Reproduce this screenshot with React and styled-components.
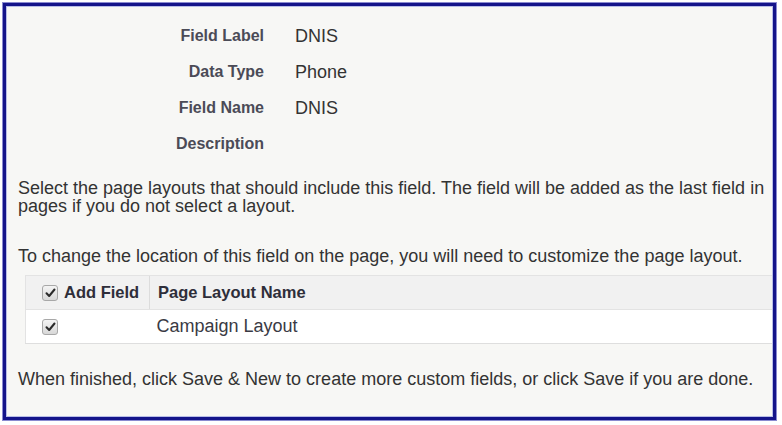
import React from "react";
import styled, { createGlobalStyle } from "styled-components";

const GlobalStyle = createGlobalStyle`
  html, body {
    margin: 0;
    padding: 0;
    background: #ffffff;
  }
  body {
    font-family: "Liberation Sans", Arial, sans-serif;
    color: #333333;
  }
`;

const details = [
  { label: "Field Label", value: "DNIS" },
  { label: "Data Type", value: "Phone" },
  { label: "Field Name", value: "DNIS" },
  { label: "Description", value: "" },
];

const layouts = [{ name: "Campaign Layout", checked: true }];

const Check = () => (
  <CheckBox>
    <svg width="11" height="10" viewBox="0 0 11 10">
      <path
        d="M1.5 5.2 L4.2 8 L9.5 1.5"
        fill="none"
        stroke="#2a2a2a"
        strokeWidth="2"
        strokeLinecap="round"
        strokeLinejoin="round"
      />
    </svg>
  </CheckBox>
);

const App = () => (
  <>
    <GlobalStyle />
    <Frame>
      <Content>
        <DetailList>
          {details.map(({ label, value }) => (
            <DetailRow key={label}>
              <DetailLabel>{label}</DetailLabel>
              <DetailValue>{value}</DetailValue>
            </DetailRow>
          ))}
        </DetailList>

        <Paragraph $top={17}>
          <Line>
            Select the page layouts that should include this field. The field
            will be added as the last field in
          </Line>
          <Line>pages if you do not select a layout.</Line>
        </Paragraph>

        <Paragraph $top={32}>
          <Line>
            To change the location of this field on the page, you will need to
            customize the page layout.
          </Line>
        </Paragraph>

        <LayoutTable>
          <thead>
            <tr>
              <HeadCell $first>
                <CheckWrap>
                  <Check />
                  Add Field
                </CheckWrap>
              </HeadCell>
              <HeadCell>Page Layout Name</HeadCell>
            </tr>
          </thead>
          <tbody>
            {layouts.map(({ name, checked }) => (
              <tr key={name}>
                <BodyCell $first>{checked && <Check />}</BodyCell>
                <BodyCell>{name}</BodyCell>
              </tr>
            ))}
          </tbody>
        </LayoutTable>

        <Paragraph $top={26}>
          <Line>
            When finished, click Save &amp; New to create more custom fields, or
            click Save if you are done.
          </Line>
        </Paragraph>
      </Content>
    </Frame>
  </>
);

const Frame = styled.div`
  margin: 2px 0 0 2px;
  width: 775px;
  height: 419px;
  box-sizing: border-box;
  border: 1px solid #8a8ad0;
  position: relative;
  overflow: hidden;

  &::after {
    content: "";
    position: absolute;
    inset: 0;
    border: 3px solid #14148a;
    box-shadow: inset 0 0 0 1px #b8bde6;
    pointer-events: none;
  }
`;

const Content = styled.div`
  height: 100%;
  background: #f7f7f5;
  padding: 15px 0 0 15px;
  box-sizing: border-box;
  width: 900px;
`;

const DetailList = styled.div`
  display: flex;
  flex-direction: column;
`;

const DetailRow = styled.div`
  display: grid;
  grid-template-columns: 246px 1fr;
  column-gap: 31px;
  align-items: center;
  height: 36px;
`;

const DetailLabel = styled.div`
  text-align: right;
  font-weight: bold;
  font-size: 16px;
  color: #4b4b57;
`;

const DetailValue = styled.div`
  font-size: 18px;
  color: #333333;
`;

const Paragraph = styled.div`
  margin-top: ${(p) => p.$top}px;
  font-size: 18px;
  line-height: 18px;
  color: #333333;
`;

const Line = styled.div`
  white-space: nowrap;
`;

const LayoutTable = styled.table`
  margin: 10px 0 0 7px;
  border-collapse: collapse;
  width: 880px;
`;

const HeadCell = styled.th`
  height: 33px;
  padding: 0 0 0 ${(p) => (p.$first ? "16px" : "8px")};
  width: ${(p) => (p.$first ? "107px" : "auto")};
  text-align: left;
  font-weight: bold;
  font-size: 16.5px;
  color: #2e2e3a;
  background: #f1f1f1;
  border-top: 1px solid #e3e3e3;
  border-bottom: 1px solid #e3e3e3;
  border-left: ${(p) => (p.$first ? "1px solid #e3e3e3" : "1px solid #dcdcdc")};
`;

const BodyCell = styled.td`
  height: 33px;
  padding: 0 0 0 ${(p) => (p.$first ? "16px" : "7px")};
  font-size: 18px;
  background: #ffffff;
  color: #3a3a44;
  border-bottom: 1px solid #dedede;
  border-left: ${(p) => (p.$first ? "1px solid #e3e3e3" : "none")};
`;

const CheckWrap = styled.span`
  display: inline-flex;
  align-items: center;
  gap: 6px;
`;

const CheckBox = styled.span`
  display: inline-flex;
  align-items: center;
  justify-content: center;
  width: 14px;
  height: 14px;
  border: 1px solid #a8a8a8;
  border-radius: 3px;
  background: linear-gradient(#f4f4f4, #d8d8d8);
  vertical-align: middle;
`;

export default App;
